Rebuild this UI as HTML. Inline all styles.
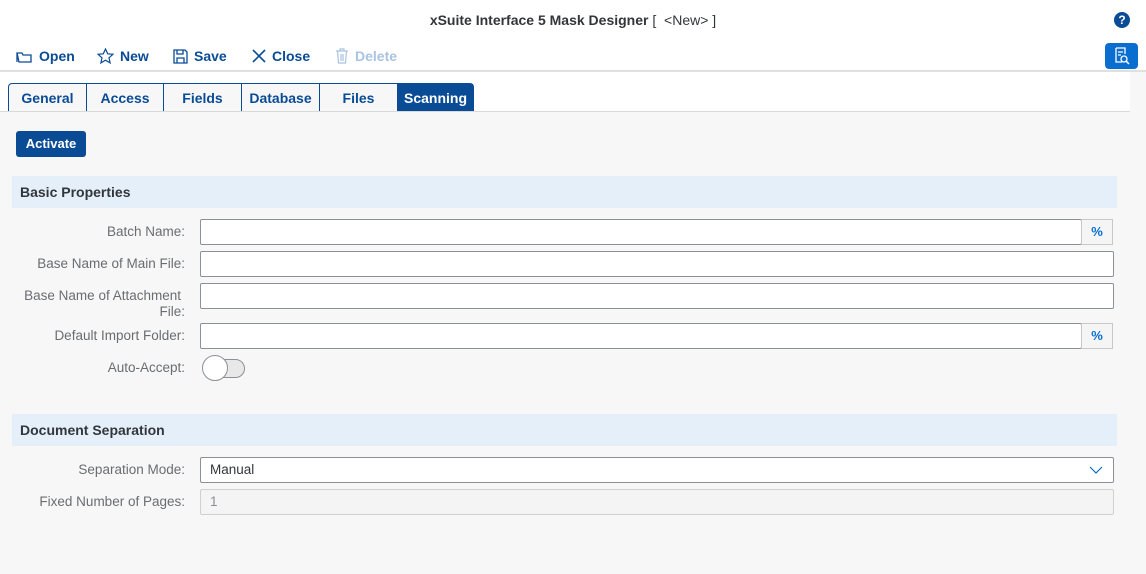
<!DOCTYPE html>
<html><head><style>
*{box-sizing:border-box;margin:0;padding:0}
body{width:1146px;height:574px;background:#f7f7f7;font-family:"Liberation Sans",sans-serif;position:relative;overflow:hidden;color:#32363a}
.abs{position:absolute}
.hdr{left:0;top:0;width:1146px;height:72px;background:#fff;border-bottom:2px solid #e0e0e0}
.title{top:12px;left:0;width:1146px;text-align:center;font-size:14px;font-weight:bold;color:#32363a}
.title span{font-weight:normal}
.tb{top:48px;font-size:14px;font-weight:bold;color:#0a4b96;display:flex;align-items:center;gap:6px}
.strip{left:0;top:72px;width:1130px;height:40px;background:#fff;border-bottom:1px solid #d9d9d9}
.tab{top:83px;height:28px;border:1px solid #0a4b96;border-bottom:none;background:#f7f7f7;color:#0a4b96;font-weight:bold;font-size:14px;text-align:center;line-height:29px}
.sec{left:12px;width:1105px;height:32px;background:#e5eff9;font-weight:bold;font-size:14px;line-height:32px;padding-left:8px;color:#32363a}
.lbl{width:185px;left:0;text-align:right;font-size:13.5px;color:#6a6d70;line-height:16px}
.inp{left:200px;height:26px;background:#fff;border:1px solid #89919a;border-radius:2px}
.pct{left:1081px;width:32px;height:26px;border:1px solid #c8c8c8;background:#f5f5f5;color:#0a6ed1;font-weight:bold;font-size:13px;text-align:center;line-height:24px}
</style></head><body>
<div class="abs hdr"></div>
<div class="abs title">xSuite Interface 5 Mask Designer <span>[ &nbsp;&lt;New&gt; ]</span></div>
<div class="abs" style="left:1114px;top:12px;width:16px;height:16px;border-radius:50%;background:#0a4b96;color:#fff;font-size:12px;font-weight:bold;text-align:center;line-height:16px">?</div>
<div class="abs" style="left:1105px;top:43px;width:33px;height:26px;background:#0a6ed1;border-radius:4px">
<svg width="33" height="26" viewBox="0 0 33 26"><path d="M11 5h9v6M11 5v14h6M13 9h5M13 12h3" stroke="#fff" stroke-width="1.3" fill="none"/><circle cx="19" cy="16" r="3" stroke="#fff" stroke-width="1.3" fill="none"/><path d="M21 18l3 3" stroke="#fff" stroke-width="1.5"/></svg></div>
<div class="abs tb" style="left:16px"><svg width="17" height="14"><path d="M1 4h5l1 2h8v7H3zM1 4v9" stroke="#0a4b96" stroke-width="1.3" fill="none"/></svg>Open</div>
<div class="abs tb" style="left:97px"><svg width="17" height="16"><path d="M8.5 1l2.2 4.8 5.2.5-3.9 3.5 1.1 5.1-4.6-2.7-4.6 2.7 1.1-5.1L1.1 6.3l5.2-.5z" stroke="#0a4b96" stroke-width="1.2" fill="none"/></svg>New</div>
<div class="abs tb" style="left:173px"><svg width="15" height="15"><path d="M1 1h11l2 2v11H1zM4 1v4h6V1M4 14V9h7v5" stroke="#0a4b96" stroke-width="1.3" fill="none"/></svg>Save</div>
<div class="abs tb" style="left:252px"><svg width="14" height="14"><path d="M1 1l12 12M13 1L1 13" stroke="#0a4b96" stroke-width="1.6"/></svg>Close</div>
<div class="abs tb" style="left:335px;color:#a9c3e0"><svg width="14" height="16"><path d="M1 3h12M5 3V1h4v2M2.5 3l1 12h7l1-12M6 6v7M8 6v7" stroke="#a9c3e0" stroke-width="1.2" fill="none"/></svg>Delete</div>
<div class="abs strip"></div>
<div class="abs tab" style="left:8px;width:79px;border-radius:4px 0 0 0">General</div>
<div class="abs tab" style="left:86px;width:78px">Access</div>
<div class="abs tab" style="left:163px;width:79px">Fields</div>
<div class="abs tab" style="left:241px;width:79px">Database</div>
<div class="abs tab" style="left:319px;width:79px">Files</div>
<div class="abs tab" style="left:397px;width:77px;background:#0a4b96;color:#fff;border-radius:0 4px 0 0">Scanning</div>
<div class="abs" style="left:16px;top:131px;width:70px;height:26px;background:#0a4b96;border-radius:3px;color:#fff;font-weight:bold;font-size:13px;text-align:center;line-height:26px">Activate</div>
<div class="abs sec" style="top:176px">Basic Properties</div>
<div class="abs lbl" style="top:224px">Batch Name:</div>
<div class="abs inp" style="top:219px;width:882px"></div><div class="abs pct" style="top:219px">%</div>
<div class="abs lbl" style="top:256px">Base Name of Main File:</div>
<div class="abs inp" style="top:251px;width:914px"></div>
<div class="abs lbl" style="top:288px;left:-4px">Base Name of Attachment<br><span style="position:relative;left:4px">File:</span></div>
<div class="abs inp" style="top:283px;width:914px"></div>
<div class="abs lbl" style="top:328px">Default Import Folder:</div>
<div class="abs inp" style="top:323px;width:882px"></div><div class="abs pct" style="top:323px">%</div>
<div class="abs lbl" style="top:360px">Auto-Accept:</div>
<div class="abs" style="left:210px;top:359px;width:35px;height:19px;border-radius:10px;background:#e8e8e8;border:1px solid #89919a"></div>
<div class="abs" style="left:202px;top:355px;width:26px;height:26px;border-radius:50%;background:#fff;border:1px solid #89919a"></div>
<div class="abs sec" style="top:414px">Document Separation</div>
<div class="abs lbl" style="top:462px">Separation Mode:</div>
<div class="abs inp" style="top:457px;width:914px;font-size:13.5px;line-height:24px;padding-left:9px;color:#32363a">Manual
<svg class="abs" style="right:10px;top:8px" width="14" height="8"><path d="M1 1l6 6 6-6" stroke="#0a6ed1" stroke-width="1.2" fill="none"/></svg></div>
<div class="abs lbl" style="top:494px">Fixed Number of Pages:</div>
<div class="abs inp" style="top:489px;width:914px;background:#f4f4f4;border-color:#d0d0d0;font-size:13.5px;line-height:24px;padding-left:9px;color:#8a8d90">1</div>
</body></html>
